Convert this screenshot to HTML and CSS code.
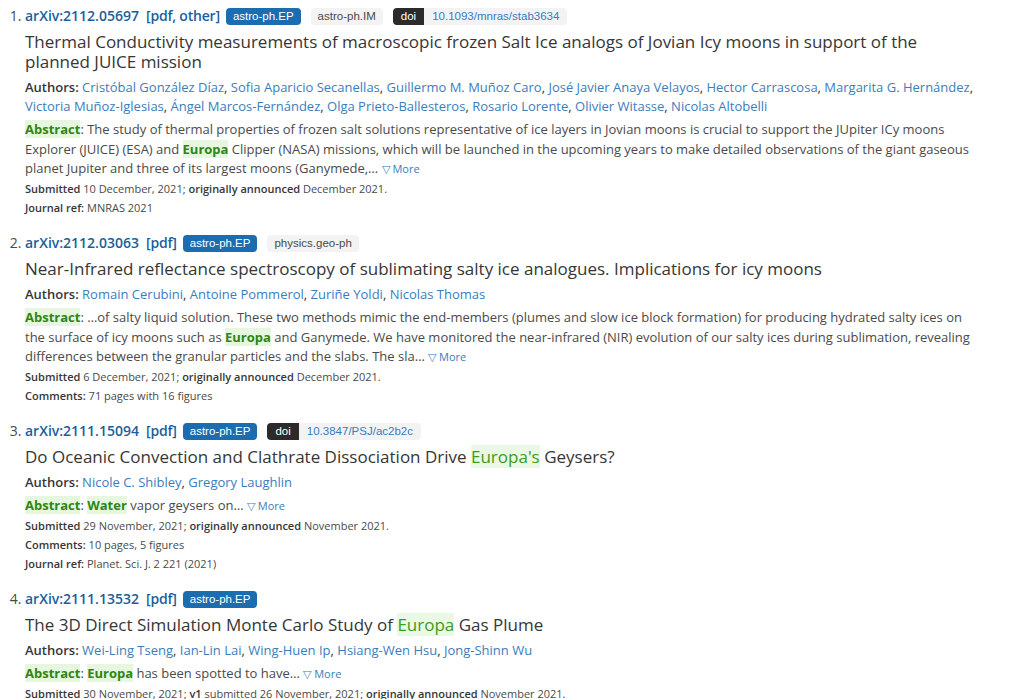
FILE: index.html
```html
<!doctype html>
<html lang="en">
<head>
<meta charset="UTF-8">
<title>arXiv search results</title>
<link rel="stylesheet" href="styles.css">
</head>
<body>
<ol class="results">
	<li class="result">
		<div class="list-title">
			<a href="#" class="id">arXiv:2112.05697</a>
			<span class="fmt">[<a href="#">pdf</a>, <a href="#">other</a>]</span>
			<div class="tags">
				<span class="tag primary">astro-ph.EP</span>
				<span class="tag light">astro-ph.IM</span>
				<span class="doi"><span class="tag dark">doi</span><a href="#" class="tag light link">10.1093/mnras/stab3634</a></span>
			</div>
		</div>
		<p class="title">Thermal Conductivity measurements of macroscopic frozen Salt Ice analogs of Jovian Icy moons in support of the planned JUICE mission</p>
		<p class="authors"><span class="label">Authors:</span> <a href="#">Cristóbal González Díaz</a>, <a href="#">Sofia Aparicio Secanellas</a>, <a href="#">Guillermo M. Muñoz Caro</a>, <a href="#">José Javier Anaya Velayos</a>, <a href="#">Hector Carrascosa</a>, <a href="#">Margarita G. Hernández</a>, <a href="#">Victoria Muñoz-Iglesias</a>, <a href="#">Ángel Marcos-Fernández</a>, <a href="#">Olga Prieto-Ballesteros</a>, <a href="#">Rosario Lorente</a>, <a href="#">Olivier Witasse</a>, <a href="#">Nicolas Altobelli</a></p>
		<p class="abstract"><span class="hl">Abstract</span>: The study of thermal properties of frozen salt solutions representative of ice layers in Jovian moons is crucial to support the JUpiter ICy moons Explorer (JUICE) (ESA) and <span class="hl">Europa</span> Clipper (NASA) missions, which will be launched in the upcoming years to make detailed observations of the giant gaseous planet Jupiter and three of its largest moons (Ganymede,&hellip; <a href="#" class="more">&#9661; More</a></p>
		<p class="meta"><b>Submitted</b> 10 December, 2021; <b>originally announced</b> December 2021.</p>
		<p class="meta"><b>Journal ref:</b> MNRAS 2021</p>
	</li>
	<li class="result">
		<div class="list-title">
			<a href="#" class="id">arXiv:2112.03063</a>
			<span class="fmt">[<a href="#">pdf</a>]</span>
			<div class="tags">
				<span class="tag primary">astro-ph.EP</span>
				<span class="tag light">physics.geo-ph</span>
			</div>
		</div>
		<p class="title">Near-Infrared reflectance spectroscopy of sublimating salty ice analogues. Implications for icy moons</p>
		<p class="authors"><span class="label">Authors:</span> <a href="#">Romain Cerubini</a>, <a href="#">Antoine Pommerol</a>, <a href="#">Zuriñe Yoldi</a>, <a href="#">Nicolas Thomas</a></p>
		<p class="abstract"><span class="hl">Abstract</span>: &hellip;of salty liquid solution. These two methods mimic the end-members (plumes and slow ice block formation) for producing hydrated salty ices on the surface of icy moons such as <span class="hl">Europa</span> and Ganymede. We have monitored the near-infrared (NIR) evolution of our salty ices during sublimation, revealing differences between the granular particles and the slabs. The sla&hellip; <a href="#" class="more">&#9661; More</a></p>
		<p class="meta"><b>Submitted</b> 6 December, 2021; <b>originally announced</b> December 2021.</p>
		<p class="meta"><b>Comments:</b> 71 pages with 16 figures</p>
	</li>
	<li class="result">
		<div class="list-title">
			<a href="#" class="id">arXiv:2111.15094</a>
			<span class="fmt">[<a href="#">pdf</a>]</span>
			<div class="tags">
				<span class="tag primary">astro-ph.EP</span>
				<span class="doi"><span class="tag dark">doi</span><a href="#" class="tag light link">10.3847/PSJ/ac2b2c</a></span>
			</div>
		</div>
		<p class="title">Do Oceanic Convection and Clathrate Dissociation Drive <span class="hl-title">Europa's</span> Geysers?</p>
		<p class="authors"><span class="label">Authors:</span> <a href="#">Nicole C. Shibley</a>, <a href="#">Gregory Laughlin</a></p>
		<p class="abstract"><span class="hl">Abstract</span>: <span class="hl">Water</span> vapor geysers on&hellip; <a href="#" class="more">&#9661; More</a></p>
		<p class="meta"><b>Submitted</b> 29 November, 2021; <b>originally announced</b> November 2021.</p>
		<p class="meta"><b>Comments:</b> 10 pages, 5 figures</p>
		<p class="meta"><b>Journal ref:</b> Planet. Sci. J. 2 221 (2021)</p>
	</li>
	<li class="result">
		<div class="list-title">
			<a href="#" class="id">arXiv:2111.13532</a>
			<span class="fmt">[<a href="#">pdf</a>]</span>
			<div class="tags">
				<span class="tag primary">astro-ph.EP</span>
			</div>
		</div>
		<p class="title">The 3D Direct Simulation Monte Carlo Study of <span class="hl-title">Europa</span> Gas Plume</p>
		<p class="authors"><span class="label">Authors:</span> <a href="#">Wei-Ling Tseng</a>, <a href="#">Ian-Lin Lai</a>, <a href="#">Wing-Huen Ip</a>, <a href="#">Hsiang-Wen Hsu</a>, <a href="#">Jong-Shinn Wu</a></p>
		<p class="abstract"><span class="hl">Abstract</span>: <span class="hl">Europa</span> has been spotted to have&hellip; <a href="#" class="more">&#9661; More</a></p>
		<p class="meta"><b>Submitted</b> 30 November, 2021; <b>v1</b> submitted 26 November, 2021; <b>originally announced</b> November 2021.</p>
	</li>
</ol>
</body>
</html>
```

FILE: styles.css
```css
body{
	margin:0;
	background:#fff;
	font-family:"Open Sans", "Noto Sans", sans-serif;
	color:#363636;
}
a{
	text-decoration:none;
}
.results{
	margin:0;
	padding:6px 40px 0 25px;
}
.result{
	padding-bottom:16.5px;
}
.result::marker{
	color:#4a4a4a;
	font-size:14px;
}
.list-title{
	display:flex;
	align-items:center;
	height:20px;
	font-size:14px;
	line-height:20px;
}
.list-title a{
	color:#1a5f9c;
	font-weight:600;
}
.fmt{
	margin-left:7px;
	color:#1a5f9c;
	font-weight:600;
	letter-spacing:-0.2px;
}
.tags{
	display:flex;
	align-items:center;
	gap:10px;
	margin-left:6px;
}
.tag{
	display:inline-block;
	height:17px;
	line-height:17px;
	padding:0 7px;
	border-radius:4px;
	font-family:"Liberation Sans", Arial, sans-serif;
	font-size:11.5px;
}
.tag.primary{
	background:#1c6cb0;
	color:#fff;
}
.tag.light{
	background:#f3f3f3;
	color:#4a4a4a;
}
.tag.dark{
	background:#2b2b2b;
	color:#fff;
	padding:0 8px;
	border-radius:4px 0 0 4px;
}
.doi{
	display:flex;
}
.doi .tag.link{
	border-radius:0 4px 4px 0;
	padding:0 8px;
	color:#3a7bbf;
	font-weight:normal;
}
.title{
	margin:6px 0 0;
	font-size:17px;
	line-height:20px;
	color:#363636;
}
.hl-title{
	background:#eaf9e4;
	color:#3f9a22;
}
.authors{
	margin:6px 0 0;
	font-size:13px;
	line-height:19px;
}
.authors .label{
	color:#363636;
	font-weight:600;
}
.authors a{
	color:#3b7dbd;
}
.abstract{
	margin:4px 0 0;
	font-size:13px;
	line-height:19.5px;
	color:#4a4a4a;
}
.hl{
	background:#e7f7df;
	color:#2e8516;
	font-weight:700;
}
.more{
	color:#3b7dbd;
	font-size:11px;
}
.meta{
	margin:0;
	font-size:11px;
	line-height:19px;
	color:#4a4a4a;
}
.meta b{
	color:#363636;
	font-weight:600;
}
```
